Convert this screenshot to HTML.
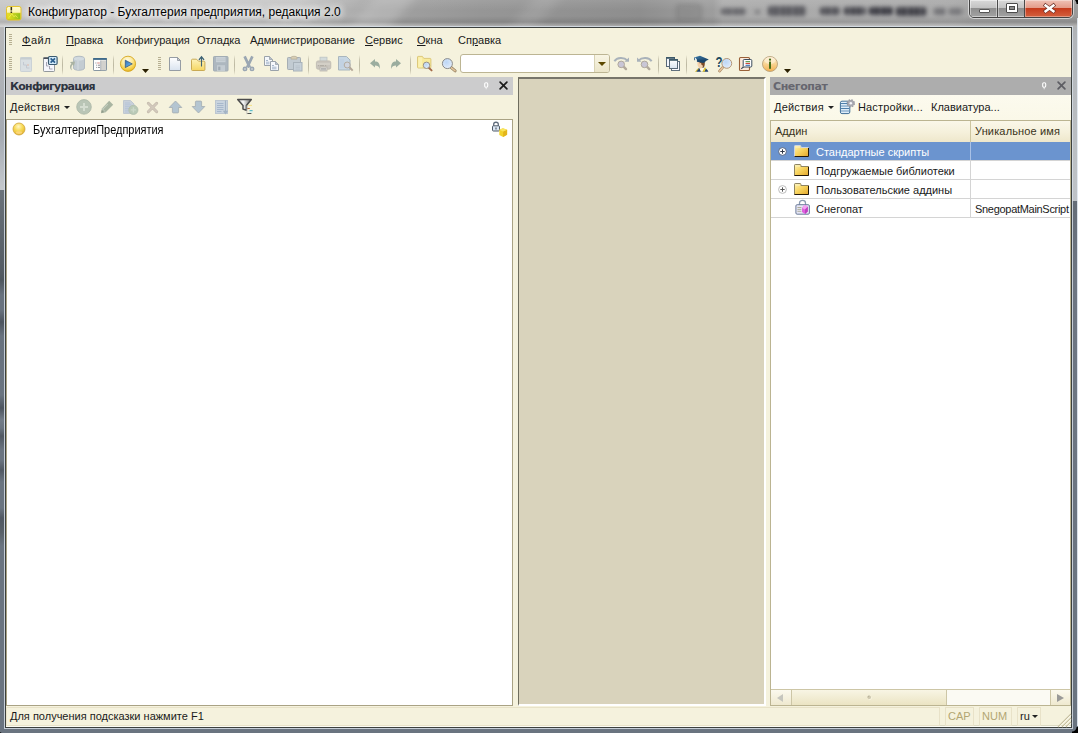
<!DOCTYPE html>
<html lang="ru">
<head>
<meta charset="utf-8">
<title>Конфигуратор - Бухгалтерия предприятия, редакция 2.0</title>
<style>
html,body{margin:0;padding:0;}
body{width:1078px;height:733px;overflow:hidden;position:relative;background:#8a8f96;font-family:"Liberation Sans",sans-serif;font-size:11px;color:#1a1a1a;}
.abs{position:absolute;}
#frame{position:absolute;left:0;top:0;width:1078px;height:733px;background:linear-gradient(to bottom,#656d77 200px,#6e7682 280px,#6a7480 733px);}
#titlebar{position:absolute;left:0;top:0;width:1078px;height:27px;overflow:hidden;
 background:linear-gradient(to right,#c6c6c6 0px,#cfcfcf 120px,#c4c4c4 300px,#a2a2a2 380px,#969696 480px,#8e8e8e 640px,#9c9c9c 700px,#a6a6a6 900px,#9a9a9a 1078px);}
#titletext{position:absolute;left:28px;top:5px;font-size:12px;line-height:14px;color:#000;white-space:nowrap;text-shadow:0 0 6px #fff,0 0 8px #fff,0 0 10px #fff;}
#client{position:absolute;left:6px;top:28px;width:1065px;height:699px;background:#f5f2dd;}
.t{position:absolute;white-space:nowrap;line-height:13px;font-size:11px;}
u{text-decoration:underline;text-underline-offset:1px;}

.grip{position:absolute;width:3px;background:repeating-linear-gradient(to bottom,#b7b092 0px,#b7b092 1px,transparent 1px,transparent 2px);}
.sep{position:absolute;top:27px;width:1px;height:20px;background:linear-gradient(to bottom,rgba(196,192,172,0),#cbc7b1 22%,#bdb9a2 50%,#cbc7b1 78%,rgba(196,192,172,0));}
.tri{width:0;height:0;border-left:3px solid transparent;border-right:3px solid transparent;border-top:3px solid #222;}
.sbox{height:19px;box-sizing:border-box;border:1px solid #e8e2c8;}
.ic{position:absolute;display:block;overflow:visible;}
.blr{filter:blur(2.1px);border-radius:3px;}
.tx{background:repeating-linear-gradient(90deg,rgba(28,28,38,.95) 0,rgba(28,28,38,.95) 4px,rgba(28,28,38,.55) 4px,rgba(28,28,38,.55) 6.5px);}
.hd{font-family:"DejaVu Sans","Liberation Sans",sans-serif;font-weight:bold;font-size:11px;letter-spacing:-0.75px;}
.sp1{letter-spacing:0.15px;}
</style>
</head>
<body>
<div id="frame">
 <div class="abs" style="left:0;top:0;width:6px;height:190px;background:linear-gradient(to bottom,#bcbcbc 0,#b2b4b8 60px,#a5abb3 135px,#c4c8cc 189px);"></div>
 <div class="abs" style="left:0;top:190px;width:6px;height:543px;background:linear-gradient(to bottom,#6a727a 0,#545c64 80px,#4e565e 90px,#68727e 105px,#68727e 120px,#4c545e 132px,#68727e 146px,#6a7480 205px,#4c545e 218px,#727c88 230px,#6a7480 238px,#505862 246px,#6a7480 260px,#6a7480 270px,#505862 280px,#6a7480 292px,#6a7480 318px,#505862 328px,#586068 342px,#6a7480 356px,#6a7480 543px);"></div>
 <div class="abs" style="left:1071px;top:0;width:7px;height:201px;background:linear-gradient(to bottom,#a8a8a8 0,#b2b6ba 40px,#bfc3c7 200px);"></div>
</div>
<div id="titlebar">
  <div class="abs" style="left:713px;top:0;width:262px;height:27px;background:linear-gradient(to right,rgba(176,176,176,.0),rgba(176,176,176,.75) 10px,rgba(170,170,170,.7) 240px,rgba(160,160,160,0));"></div>
  <div class="abs" style="left:0;top:0;width:1078px;height:27px;background:linear-gradient(to bottom,rgba(255,255,255,.10) 0,rgba(255,255,255,0) 10px,rgba(0,0,0,.0) 16px,rgba(0,0,0,.10) 22px,rgba(255,255,255,.25) 26px);"></div>
  <div class="abs" style="left:360px;top:-20px;width:40px;height:70px;background:rgba(255,255,255,.18);transform:skewX(-40deg);filter:blur(6px);"></div>
  <div class="abs" style="left:520px;top:-20px;width:26px;height:70px;background:rgba(255,255,255,.10);transform:skewX(-40deg);filter:blur(6px);"></div>
  <div class="abs blr" style="left:677px;top:5px;width:24px;height:15px;background:rgba(120,120,120,.35);box-shadow:0 0 0 1px rgba(70,70,70,.35);"></div>
  <div class="abs blr tx" style="left:721px;top:8px;width:25px;height:7px;opacity:.55;"></div>
  <div class="abs blr" style="left:755px;top:10px;width:5px;height:4px;background:rgba(60,60,66,.5);"></div>
  <div class="abs blr tx" style="left:768px;top:6px;width:38px;height:10px;opacity:.65;"></div>
  <div class="abs blr tx" style="left:820px;top:7px;width:20px;height:8px;opacity:.7;"></div>
  <div class="abs blr tx" style="left:844px;top:7px;width:22px;height:8px;opacity:.8;"></div>
  <div class="abs blr tx" style="left:869px;top:7px;width:24px;height:8px;opacity:.9;"></div>
  <div class="abs blr tx" style="left:896px;top:7px;width:30px;height:9px;opacity:.85;"></div>
  <div class="abs blr tx" style="left:934px;top:8px;width:12px;height:7px;opacity:.45;"></div>
  <div class="abs blr tx" style="left:949px;top:8px;width:14px;height:7px;opacity:.4;"></div>
  <div id="titletext">Конфигуратор - Бухгалтерия предприятия, редакция 2.0</div>
  <!-- window buttons -->
  <div class="abs" style="left:969px;top:-1px;width:104px;height:19px;box-sizing:border-box;border:1px solid #434343;border-radius:0 0 5px 5px;overflow:hidden;box-shadow:0 0 0 1px rgba(255,255,255,.55);">
    <div class="abs" style="left:0;top:0;width:55px;height:17px;background:linear-gradient(to bottom,#d9d9d9 0,#c2c2c2 8px,#8d8d8d 8px,#a3a3a3 17px);box-shadow:inset 0 0 0 1px rgba(255,255,255,.45);"></div>
    <div class="abs" style="left:27px;top:0;width:1px;height:17px;background:#4a4a4a;box-shadow:1px 0 0 rgba(255,255,255,.4),-1px 0 0 rgba(255,255,255,.4);"></div>
    <div class="abs" style="left:54px;top:0;width:1px;height:17px;background:#4a4a4a;"></div>
    <div class="abs" style="left:55px;top:0;width:47px;height:17px;background:linear-gradient(to bottom,#efc2b6 0,#e39a88 8px,#c5391b 8px,#d4603e 17px);box-shadow:inset 0 0 0 1px rgba(255,255,255,.35);"></div>
    <!-- glyphs -->
    <div class="abs" style="left:9px;top:9px;width:11px;height:4px;box-sizing:border-box;background:#fff;border:1px solid #555;border-radius:1px;"></div>
    <div class="abs" style="left:36px;top:3px;width:12px;height:10px;box-sizing:border-box;border:1px solid #4c4c4c;border-radius:1px;background:#fff;"></div>
    <div class="abs" style="left:39px;top:6px;width:6px;height:4px;box-sizing:border-box;border:1px solid #4c4c4c;background:#8c8c8c;"></div>
    <svg class="ic" style="left:73px;top:3px" width="13" height="11" viewBox="0 0 13 11"><path d="M2.600 2.400l7.800 5.800M10.400 2.400l-7.800 5.800" stroke="#6a3028" stroke-width="3.800" stroke-linecap="square"/><path d="M2.600 2.400l7.800 5.800M10.400 2.400l-7.800 5.800" stroke="#ffffff" stroke-width="2.500" stroke-linecap="square"/></svg>
  </div>
</div>
<!-- black corners -->
<div class="abs" style="left:-4px;top:-4px;width:8px;height:8px;background:radial-gradient(circle at 100% 100%,transparent 6px,#000 7px);"></div>
<div class="abs" style="left:1071px;top:-3px;width:7px;height:7px;background:radial-gradient(circle at 0 100%,transparent 5px,#000 6px);"></div>
<div class="abs" style="left:-3px;top:728px;width:7px;height:7px;background:radial-gradient(circle at 100% 0,transparent 5px,#000 6px);"></div>
<div class="abs" style="left:1072px;top:727px;width:6px;height:6px;background:radial-gradient(circle at 0 0,transparent 4px,#000 5px);"></div>
<!-- window border lines -->
<div class="abs" style="left:4px;top:26px;width:1069px;height:703px;border:1px solid rgba(214,222,230,.85);box-sizing:border-box;"></div>
<div class="abs" style="left:1077px;top:18px;width:1px;height:708px;background:rgba(228,236,244,.9);"></div>
<div class="abs" style="left:5px;top:27px;width:1067px;height:701px;border:1px solid #3c403e;box-sizing:border-box;"></div>
<div id="client">
<!-- menu bar -->
<div class="grip" style="left:3px;top:6px;height:11px;"></div>
<div class="t menu" style="left:16px;top:6px;letter-spacing:0.5px;"><u>Ф</u>айл</div>
<div class="t menu" style="left:60px;top:6px;"><u>П</u>равка</div>
<div class="t menu" style="left:110px;top:6px;">Конфигурация</div>
<div class="t menu" style="left:191px;top:6px;">Отладка</div>
<div class="t menu" style="left:244px;top:6px;">Администрирование</div>
<div class="t menu" style="left:359px;top:6px;"><u>С</u>ервис</div>
<div class="t menu" style="left:411px;top:6px;"><u>О</u>кна</div>
<div class="t menu" style="left:452px;top:6px;">Сп<u>р</u>авка</div>
<!-- toolbar -->
<div class="grip" style="left:3px;top:29px;height:13px;"></div>
<div class="grip" style="left:152px;top:29px;height:13px;"></div>
<div class="sep" style="left:56px;"></div>
<div class="sep" style="left:107px;"></div>
<div class="sep" style="left:228px;"></div>
<div class="sep" style="left:302px;"></div>
<div class="sep" style="left:353px;"></div>
<div class="sep" style="left:404px;"></div>
<div class="sep" style="left:652px;"></div>
<div class="sep" style="left:680px;"></div>
<!-- search combo -->
<div class="abs" style="left:454px;top:26px;width:150px;height:19px;box-sizing:border-box;border:1px solid #bcb593;border-radius:3px;background:#fff;overflow:hidden;">
  <div class="abs" style="right:0;top:0;width:14px;height:17px;border-left:1px solid #d8d2b4;background:linear-gradient(#f8f5e4,#ebe5c9);"></div>
  <div class="abs" style="right:3px;top:7px;width:0;height:0;border-left:4px solid transparent;border-right:4px solid transparent;border-top:4px solid #5c4800;"></div>
</div>

<!-- LEFT PANEL -->
<div class="abs" style="left:0;top:49px;width:507px;height:18px;background:#cccccd;"></div>
<div class="t hd" style="left:4px;top:52px;color:#2e3440;">Конфигурация</div>
<div class="t" style="left:4px;top:73px;letter-spacing:0.2px;">Действия</div>
<div class="abs tri" style="left:58px;top:78px;"></div>
<div class="abs" style="left:0;top:91px;width:507px;height:587px;box-sizing:border-box;border:1px solid #a9a284;background:#fff;"></div>
<div class="t" style="left:27px;top:96px;font-size:12.3px;color:#000;transform:scaleX(0.89);transform-origin:0 0;">БухгалтерияПредприятия</div>

<!-- MDI AREA -->
<div class="abs" style="left:512px;top:49px;width:248px;height:629px;box-sizing:border-box;background:#d9d3bc;border-left:1px solid #6f6d5e;border-top:2px solid #77756a;border-right:2px solid #fff;border-bottom:2px solid #fff;"></div>

<!-- RIGHT PANEL -->
<div class="abs" style="left:764px;top:49px;width:301px;height:18px;background:#adadad;"></div>
<div class="abs" style="left:764px;top:67px;width:301px;height:25px;background:linear-gradient(#fcfaee,#faf8e8);"></div>
<div class="t hd" style="left:767px;top:52px;color:#66666f;letter-spacing:-0.42px;">Снегопат</div>
<div class="t" style="left:768px;top:73px;letter-spacing:0.2px;">Действия</div>
<div class="abs tri" style="left:822px;top:78px;"></div>
<div class="t sp1" style="left:852px;top:73px;">Настройки...</div>
<div class="t" style="left:925px;top:73px;">Клавиатура...</div>
<!-- table -->
<div class="abs" style="left:764px;top:92px;width:301px;height:586px;box-sizing:border-box;border:1px solid #bbb491;background:#fff;overflow:hidden;">
  <div class="abs" style="left:0;top:0;width:299px;height:21px;background:linear-gradient(#faf7e9,#f5f0db 55%,#eee7cb);"></div>
  <div class="abs" style="left:0;top:21px;width:299px;height:18px;background:#6b94cf;"></div>
  <div class="abs" style="left:0;top:39px;width:299px;height:1px;background:#d4d4d4;"></div>
  <div class="abs" style="left:0;top:58px;width:299px;height:1px;background:#d4d4d4;"></div>
  <div class="abs" style="left:0;top:77px;width:299px;height:1px;background:#d4d4d4;"></div>
  <div class="abs" style="left:0;top:96px;width:299px;height:1px;background:#d4d4d4;"></div>
  <div class="abs" style="left:199px;top:0;width:1px;height:21px;background:#cdc59f;"></div>
  <div class="abs" style="left:199px;top:21px;width:1px;height:76px;background:#d4d4d4;"></div>
  <div class="abs" style="left:199px;top:21px;width:1px;height:18px;background:#a9c1e6;"></div>
  <div class="t" style="left:4px;top:4px;color:#3a3420;">Аддин</div>
  <div class="t sp1" style="left:204px;top:4px;color:#3a3420;">Уникальное имя</div>
  <div class="t" style="left:45px;top:25px;color:#fff;">Стандартные скрипты</div>
  <div class="t" style="left:45px;top:44px;">Подгружаемые библиотеки</div>
  <div class="t" style="left:45px;top:63px;">Пользовательские аддины</div>
  <div class="t" style="left:45px;top:82px;">Снегопат</div>
  <div class="t" style="left:204px;top:82px;letter-spacing:-0.3px;">SnegopatMainScript</div>
  <!-- h scrollbar -->
  <div class="abs" style="left:0;top:568px;width:299px;height:17px;box-sizing:border-box;border-top:1px solid #cdc6a6;background:#fbfaf3;"></div>
  <div class="abs" style="left:0;top:569px;width:20px;height:15px;background:linear-gradient(#fbf9ee,#efe9cf);border-right:1px solid #cdc6a6;"></div>
  <div class="abs" style="left:21px;top:569px;width:154px;height:15px;background:linear-gradient(#f8f5e4,#ebe4c3);border-right:1px solid #cdc6a6;"></div>
  <div class="abs" style="left:279px;top:569px;width:20px;height:15px;background:linear-gradient(#fbf9ee,#efe9cf);border-left:1px solid #cdc6a6;"></div>
  <div class="abs" style="left:6px;top:573px;width:0;height:0;border-top:4px solid transparent;border-bottom:4px solid transparent;border-right:6px solid #c6c6be;"></div>
  <div class="abs" style="left:286px;top:573px;width:0;height:0;border-top:4px solid transparent;border-bottom:4px solid transparent;border-left:7px solid #9a9a98;"></div>
  <div class="abs" style="left:97px;top:575px;width:3px;height:3px;border-radius:2px;background:#d0cab0;box-shadow:-0.5px -0.5px 0 #a8a28a,0.5px 0.5px 0 #fffdf0;"></div>
</div>

<!-- STATUS BAR -->
<div class="abs" style="left:0;top:697px;width:1065px;height:1px;background:#dcdac2;"></div>
<div class="abs" style="left:0;top:698px;width:1065px;height:1px;background:#fcfcf4;"></div>
<div class="t" style="left:4px;top:682px;">Для получения подсказки нажмите F1</div>
<div class="abs sbox" style="left:0px;top:679px;width:934px;"></div>
<div class="abs sbox" style="left:939px;top:679px;width:29px;"></div>
<div class="abs sbox" style="left:973px;top:679px;width:33px;"></div>
<div class="abs sbox" style="left:1011px;top:679px;width:24px;"></div>
<div class="t" style="left:942px;top:682px;color:#b3a672;">CAP</div>
<div class="t" style="left:976px;top:682px;color:#b3a672;">NUM</div>
<div class="t" style="left:1014px;top:682px;">ru</div>
<div class="abs tri" style="left:1026px;top:687px;"></div>
</div>
<!-- ICONS LAYER (page coordinates) -->
<div id="icons" class="abs" style="left:0;top:0;width:1078px;height:733px;pointer-events:none;">
<svg width="0" height="0" style="position:absolute">
 <defs>
  <linearGradient id="gDoc" x1="0" y1="0" x2="0" y2="1"><stop offset="0" stop-color="#ffffff"/><stop offset="1" stop-color="#d9e3ef"/></linearGradient>
  <linearGradient id="gFold" x1="0" y1="0" x2="0" y2="1"><stop offset="0" stop-color="#fdf2b8"/><stop offset="1" stop-color="#f5d662"/></linearGradient>
  <linearGradient id="gFold2" x1="0" y1="0" x2="1" y2="1"><stop offset="0" stop-color="#fff3b0"/><stop offset="0.5" stop-color="#f7d25c"/><stop offset="1" stop-color="#e2a62c"/></linearGradient>
  <radialGradient id="gPlay" cx="0.45" cy="0.3" r="0.75"><stop offset="0" stop-color="#fffdf0"/><stop offset="0.45" stop-color="#fbe99a"/><stop offset="0.8" stop-color="#f3c93a"/><stop offset="1" stop-color="#d9a51e"/></radialGradient>
  <linearGradient id="gTri" x1="0" y1="0" x2="1" y2="1"><stop offset="0" stop-color="#2f6fb8"/><stop offset="0.6" stop-color="#5aa2de"/><stop offset="1" stop-color="#8cc4ee"/></linearGradient>
  <radialGradient id="gLens" cx="0.4" cy="0.35" r="0.8"><stop offset="0" stop-color="#bcd6f6"/><stop offset="0.6" stop-color="#d8e6f8"/><stop offset="1" stop-color="#f4f8fd"/></radialGradient>
  <linearGradient id="gInfo" x1="0" y1="0" x2="0" y2="1"><stop offset="0" stop-color="#fdeccc"/><stop offset="0.5" stop-color="#f9d392"/><stop offset="1" stop-color="#f2b04e"/></linearGradient>
  <radialGradient id="gBall" cx="0.45" cy="0.3" r="0.8"><stop offset="0" stop-color="#fff6c4"/><stop offset="0.45" stop-color="#f7d954"/><stop offset="0.85" stop-color="#e3b431"/><stop offset="1" stop-color="#c89a3a"/></radialGradient>
  <linearGradient id="gFunnel" x1="0" y1="0" x2="1" y2="0"><stop offset="0" stop-color="#c8c8c8"/><stop offset="0.4" stop-color="#f8f8f8"/><stop offset="1" stop-color="#707070"/></linearGradient>
  <linearGradient id="gCap" x1="0" y1="0" x2="1" y2="1"><stop offset="0" stop-color="#3a78a8"/><stop offset="1" stop-color="#133a5c"/></linearGradient>
 </defs>
</svg>

<!-- title icon -->
<svg class="ic" style="left:6px;top:5.5px" width="15.5" height="14.5" viewBox="0 0 16 15">
 <defs><linearGradient id="gT1" x1="0" y1="0" x2="0" y2="1"><stop offset="0" stop-color="#fffbd0"/><stop offset="0.42" stop-color="#fdf6b4"/><stop offset="0.5" stop-color="#d9d640"/><stop offset="1" stop-color="#b4c81c"/></linearGradient>
 <linearGradient id="gT2" x1="0" y1="0" x2="1" y2="0"><stop offset="0" stop-color="#f2e21e" stop-opacity="0.9"/><stop offset="1" stop-color="#8cc018" stop-opacity="0.9"/></linearGradient></defs>
 <rect x="0.5" y="0.5" width="15" height="14" rx="2" fill="url(#gT1)" stroke="#e6c322"/>
 <rect x="1.5" y="7.5" width="13" height="6" fill="url(#gT2)"/>
 <path d="M5.5 1v3.6M5.5 5.6v1.6" stroke="#3a3418" stroke-width="1.6"/>
 <path d="M3 12l3-4 2 3 2-1 2 2" stroke="#f6f05a" stroke-width="1" fill="none" opacity="0.8"/>
</svg>

<!-- 1 tree window disabled -->
<svg class="ic" style="left:18px;top:56px" width="16" height="16" viewBox="0 0 16 16">
 <rect x="2.5" y="1.5" width="11" height="14" rx="0.8" fill="#d9dfe2" stroke="#cbd2d6"/>
 <rect x="2.5" y="1.5" width="11" height="2" fill="#c6cdd0"/>
 <path d="M5.5 6v3h3M8.5 9v3h3" stroke="#c3c9d2" fill="none"/>
 <path d="M9 9h2" stroke="#e0b8a8"/>
</svg>
<!-- 2 close window -->
<svg class="ic" style="left:42px;top:56px" width="16" height="16" viewBox="0 0 16 16">
 <rect x="1.5" y="1.5" width="11" height="14" rx="0.8" fill="#f6f6fc" stroke="#878d93" stroke-width="0.9"/>
 <rect x="1.5" y="1.5" width="5" height="1.5" fill="#4a5058"/>
 <path d="M4.5 6v4h2M7.5 10v3h3" stroke="#a4a4b2" fill="none"/>
 <rect x="6.5" y="0.5" width="8.6" height="8" rx="1.2" fill="#d4ebfb" stroke="#3a5a70" stroke-width="1.2"/>
 <path d="M8.6 2.4l4.4 4.2M13 2.4l-4.4 4.2" stroke="#2c5f8e" stroke-width="1.7"/>
</svg>
<!-- 3 db -->
<svg class="ic" style="left:69px;top:56px" width="17" height="16" viewBox="0 0 17 16">
 <path d="M4.5 2.5c0-3 11-3 11 0v9.5c0 3-11 3-11 0z" fill="#c3ccd2" stroke="#b3bcc3"/>
 <ellipse cx="10" cy="2.7" rx="5.2" ry="1.8" fill="#d3dbe0"/>
 <path d="M9 3v11" stroke="#d0d8dc" stroke-width="2" opacity="0.7"/>
 <path d="M1 6l5-0.5-1 4.5-1.2-1.4c-1.6 1.6-1.8 3.6-0.8 6-2.6-2.2-2.6-5-0.6-7.2z" fill="#a9b2a2"/>
</svg>
<!-- 4 window list -->
<svg class="ic" style="left:92px;top:56px" width="16" height="16" viewBox="0 0 16 16">
 <rect x="1.5" y="2.5" width="13" height="12" rx="0.6" fill="#ffffff" stroke="#7b8b99" stroke-width="0.9"/>
 <rect x="1.2" y="2" width="13.6" height="1.9" fill="#3f6a8a"/>
 <rect x="9" y="4.4" width="5" height="9.8" fill="#d2d2ce"/>
 <path d="M8.7 4.4v10" stroke="#9aa2a8" stroke-width="0.8"/>
 <path d="M3.4 7h1" stroke="#8a8a90"/><path d="M5.2 7h2.6" stroke="#d07a74" stroke-width="0.9"/>
 <path d="M4.2 9.2h1M6 9.2h2M4.2 11.4h1M6 11.4h2" stroke="#8a8a90"/>
</svg>
<!-- 5 play -->
<svg class="ic" style="left:119px;top:55px" width="18" height="18" viewBox="0 0 18 18">
 <circle cx="9" cy="8.8" r="7.6" fill="url(#gPlay)" stroke="#d6a722" stroke-width="0.9"/>
 <path d="M6.3 5.2v7.4l7-3.7z" fill="url(#gTri)" stroke="#2c4c74" stroke-width="0.7" stroke-linejoin="round"/>
</svg>
<svg class="ic" style="left:142px;top:69px" width="7" height="4" viewBox="0 0 7 4"><path d="M0 0h7l-3.5 4z" fill="#2a2000"/></svg>
<!-- 6 new -->
<svg class="ic" style="left:167px;top:56px" width="16" height="16" viewBox="0 0 16 16">
 <path d="M2.500 1.500h8l3 3v10h-11z" fill="url(#gDoc)" stroke="#959ca4"/>
 <path d="M10.5 1.5v3h3z" fill="#c9d0d8" stroke="#8b929a" stroke-width="0.8"/>
</svg>
<!-- 7 open -->
<svg class="ic" style="left:190px;top:56px" width="16" height="16" viewBox="0 0 16 16">
 <path d="M1.5 4.2c0-0.6 0.4-1 1-1h4l2 2h5.4c0.6 0 1 0.4 1 1v7.3c0 0.6-0.4 1-1 1h-11.4c-0.6 0-1-0.4-1-1z" fill="url(#gFold)" stroke="#c9aa54"/>
 <path d="M11.5 10.5v-9" stroke="#3c6274" stroke-width="1.1"/>
 <path d="M9 3.900l2.500-3 2.500 3" fill="none" stroke="#3c6274" stroke-width="1.400"/>
</svg>
<!-- 8 save disabled -->
<svg class="ic" style="left:213px;top:56px" width="16" height="16" viewBox="0 0 16 16">
 <rect x="0.5" y="0.5" width="14.5" height="14.5" rx="0.8" fill="#adb7bf" stroke="#a2acb4"/>
 <rect x="3" y="1" width="9.5" height="5.2" fill="#c9d1d7"/>
 <path d="M3.5 3h8.5M3.5 4.6h8.5" stroke="#b8c1c8" stroke-width="0.6"/>
 <rect x="4" y="9.2" width="8" height="5.8" fill="#c4ccd2"/>
 <rect x="5.2" y="10.6" width="2.2" height="3.6" fill="#a0aab2"/>
</svg>
<!-- 9 cut disabled -->
<svg class="ic" style="left:240px;top:56px" width="16" height="16" viewBox="0 0 16 16">
 <path d="M4.600 0.400l5.200 11M12.400 0.400l-5.200 11" stroke="#9aa6b2" stroke-width="2.700"/>
 <circle cx="5" cy="12.900" r="1.600" fill="#f0f0ea" stroke="#9aa6b2" stroke-width="1.700"/>
 <circle cx="12" cy="12.900" r="1.600" fill="#f0f0ea" stroke="#9aa6b2" stroke-width="1.700"/>
</svg>
<!-- 10 copy -->
<svg class="ic" style="left:263px;top:56px" width="17" height="16" viewBox="0 0 17 16">
 <path d="M1.5 0.5h5l3 3v6h-8z" fill="#f4f7fb" stroke="#9aa2aa"/>
 <path d="M6.5 0.5v3h3" fill="#b7c0c9" stroke="#9aa2aa" stroke-width="0.8"/>
 <path d="M3 4.5h2M3 6.2h3.5M3 7.8h3.5" stroke="#9fb0c6" stroke-width="0.9"/>
 <path d="M7.5 5.5h5l3 3v6h-8z" fill="#f6f8fc" stroke="#9aa2aa"/>
 <path d="M12.5 5.5v3h3" fill="#b7c0c9" stroke="#9aa2aa" stroke-width="0.8"/>
 <path d="M9 9.5h2M9 11.2h4.5M9 12.8h4.5" stroke="#9fb0c6" stroke-width="0.9"/>
</svg>
<!-- 11 paste disabled -->
<svg class="ic" style="left:286px;top:56px" width="17" height="16" viewBox="0 0 17 16">
 <rect x="1.5" y="1.5" width="13" height="12" rx="0.8" fill="#c2cbd2" stroke="#a6aeb4"/>
 <path d="M5 1.5c0-1.6 6-1.6 6 0v1.6h-6z" fill="#d8ceb4" stroke="#b9b09a" stroke-width="0.8"/>
 <rect x="7.5" y="6.5" width="8.5" height="8.5" fill="#c6d0d8" stroke="#a8b2ba"/>
 <path d="M9.5 10h4.5M9.5 11.6h4.5M9.5 13.2h4.5" stroke="#b4bec8" stroke-width="0.7"/>
</svg>
<!-- 12 print disabled -->
<svg class="ic" style="left:315px;top:56px" width="17" height="16" viewBox="0 0 17 16">
 <rect x="5" y="1.2" width="7" height="5.8" fill="#d3dbdb" stroke="#bcc4c4" stroke-width="0.8"/>
 <rect x="1.4" y="4.9" width="14.4" height="8.3" rx="1.8" fill="#c9c5bd" stroke="#bdb9b0" stroke-width="0.8"/>
 <path d="M2 8h13" stroke="#d6d2ca" stroke-width="1.5"/>
 <path d="M3 9.7h1.2M5 9.7h4M10 9.7h1.2" stroke="#a9a59c" stroke-width="0.9"/>
 <rect x="5" y="11" width="7" height="4" fill="#dcdcd8" stroke="#b9b5ac" stroke-width="0.8"/>
 <path d="M6 12.6h5M6 13.8h5" stroke="#a5a5a5" stroke-width="0.8"/>
</svg>
<!-- 13 preview disabled -->
<svg class="ic" style="left:338px;top:56px" width="17" height="16" viewBox="0 0 17 16">
 <path d="M0.5 0.5h8l3.5 3.5v10h-11.5z" fill="#c7d7e4" stroke="#a9b6be"/>
 <path d="M3 3v9M5 3v9" stroke="#bccbe0" stroke-width="1.2" opacity="0.7"/>
 <circle cx="9.2" cy="9" r="3" fill="#cfd5df" stroke="#b3aba0" stroke-width="1"/>
 <path d="M11.5 11.3l3.2 3.3" stroke="#b5a898" stroke-width="2"/>
</svg>
<!-- 14 undo disabled -->
<svg class="ic" style="left:367px;top:56px" width="16" height="16" viewBox="0 0 16 16">
 <path d="M3 7.2l5-4.2v2.6c3.2 0 5 1.6 5 7.4-1.2-2.8-2.4-3.4-5-3.4v2z" fill="#9bad9f"/>
</svg>
<!-- 15 redo disabled -->
<svg class="ic" style="left:388px;top:56px" width="16" height="16" viewBox="0 0 16 16">
 <path d="M13 7.2l-5-4.2v2.6c-3.2 0-5 1.6-5 7.4 1.2-2.8 2.4-3.4 5-3.4v2z" fill="#9bad9f"/>
</svg>
<!-- 16 find in files -->
<svg class="ic" style="left:416px;top:56px" width="17" height="16" viewBox="0 0 17 16">
 <path d="M1.5 1c0-0.4 0.3-0.6 0.6-0.6h4.3l1.4 2h6.4c0.4 0 0.7 0.3 0.7 0.7v8.2c0 0.4-0.3 0.7-0.7 0.7h-12c-0.4 0-0.7-0.3-0.7-0.7z" fill="#f9eb9c" stroke="#d9c474" stroke-width="0.9"/>
 <path d="M2.4 1.4h3.6v10h-3.6z" fill="#fbf3b8" opacity="0.8"/>
 <path d="M12.8 11.8l2.8 2.6" stroke="#a46a48" stroke-width="1.9" stroke-linecap="round"/>
 <circle cx="10.5" cy="9.3" r="3.2" fill="url(#gLens)" stroke="#8e847c" stroke-width="0.9"/>
</svg>
<!-- 17 search -->
<svg class="ic" style="left:440px;top:56px" width="17" height="17" viewBox="0 0 17 17">
 <path d="M11 11.4l4.2 3.5" stroke="#8c7a5c" stroke-width="2.8" stroke-linecap="round"/>
 <path d="M11.2 11.6l3.9 3.2" stroke="#e2c49c" stroke-width="1.6" stroke-linecap="round"/>
 <circle cx="7.4" cy="7.6" r="5" fill="url(#gLens)" stroke="#7e7e7e" stroke-width="0.9"/>
</svg>
<!-- 18 find next disabled -->
<svg class="ic" style="left:613px;top:56px" width="17" height="16" viewBox="0 0 17 16">
 <path d="M1.4 5.200c2.500-4 9.500-4.400 13.200-0.600" stroke="#a9b2ba" stroke-width="2" fill="none"/>
 <path d="M16 1.6v4.2h-4.6z" fill="#a9b2ba"/>
 <path d="M10.400 10.400l2.600 2.700" stroke="#b3aa9c" stroke-width="2.400" stroke-linecap="round"/>
 <circle cx="8.200" cy="8.400" r="3.300" fill="#c9c6d6" stroke="#b1a99c" stroke-width="1"/>
</svg>
<!-- 19 find prev disabled -->
<svg class="ic" style="left:636px;top:56px" width="17" height="16" viewBox="0 0 17 16">
 <path d="M15.600 5.200c-2.500-4-9.500-4.400-13.200-0.600" stroke="#a9b2ba" stroke-width="2" fill="none"/>
 <path d="M1 1.6v4.2h4.6z" fill="#a9b2ba"/>
 <path d="M10.700 10.400l2.600 2.700" stroke="#b3aa9c" stroke-width="2.400" stroke-linecap="round"/>
 <circle cx="8.500" cy="8.400" r="3.300" fill="#c9c6d6" stroke="#b1a99c" stroke-width="1"/>
</svg>
<!-- 20 windows -->
<svg class="ic" style="left:665px;top:56px" width="16" height="16" viewBox="0 0 16 16">
 <rect x="6.5" y="5.5" width="8" height="9" fill="#fafaff" stroke="#61707d"/>
 <rect x="4.5" y="3.5" width="8" height="9" fill="url(#gDoc)" stroke="#586877"/>
 <rect x="1.5" y="1.5" width="8" height="9" fill="#f4f6fc" stroke="#586877"/>
 <rect x="1.2" y="1" width="8.6" height="1.8" fill="#3c5868"/>
 <rect x="4.5" y="3.5" width="8" height="9" fill="url(#gDoc)" stroke="#586877"/>
 <rect x="4.2" y="3" width="8.6" height="1.8" fill="#3c5868"/>
 <path d="M13 5.5h1.5v9h-8v-1.7" fill="none" stroke="#61707d"/>
</svg>
<!-- 21 person -->
<svg class="ic" style="left:693px;top:55px" width="17" height="17" viewBox="0 0 17 17">
 <path d="M3.2 16.8c0.5-2.5 2.2-3.6 4.3-4.2h2.6c2.6 0.5 4.6 2 5.3 4.2z" fill="#1f3f6e"/>
 <path d="M1.8 16.8l3.2-3.4 1 0.4-2.8 3z" fill="#e2c42c"/>
 <path d="M6.3 13l1.6 3.8h2l2-4z" fill="#fffbe6"/>
 <path d="M9.3 16.8l2.5-4.4 1.4 0.5-1.6 3.9z" fill="#e8cc34"/>
 <path d="M4.6 6.8c-0.6 2.7 0.2 5.6 2.5 6.6l2.3-0.4 0.6-6.4z" fill="#f4cfa8"/>
 <path d="M6.8 6l-0.2 2.6 1.4-0.8 0.6 2.2 1 0.2 0.2 2.8 1.4-1.2c0.8-1.8 0.8-4.2 0.2-5.8z" fill="#7a4a26"/>
 <path d="M1 2.4l6-1.6 8.8 3.8-5 2.4-6.6-1.4-1.8-2z" fill="url(#gCap)"/>
 <path d="M3.9 4.6v2.2l6.5 1.3 2-1.2v-1.8z" fill="#1b456a"/>
 <path d="M1.6 2.6v2.6" stroke="#2a5a80" stroke-width="0.9"/>
 <path d="M2.2 2.7l1.3 2.5" stroke="#ffffff" stroke-width="0.9"/>
</svg>
<!-- 22 help search -->
<svg class="ic" style="left:715px;top:55px" width="18" height="18" viewBox="0 0 18 18">
 <path d="M7.5 12.7l-3 3.4" stroke="#a78660" stroke-width="2.7" stroke-linecap="round"/>
 <path d="M7.5 12.7l-3 3.4" stroke="#ecc9a4" stroke-width="1.4" stroke-linecap="round"/>
 <circle cx="11.8" cy="8.4" r="4.9" fill="url(#gLens)" stroke="#ac8c6c" stroke-width="0.9"/>
 <text x="0.8" y="12.2" transform="scale(0.74 1)" font-family="Liberation Sans, sans-serif" font-weight="bold" font-size="15.5" fill="#1c4a5e">?</text>
</svg>
<!-- 23 comment doc -->
<svg class="ic" style="left:738px;top:56px" width="16" height="16" viewBox="0 0 16 16">
 <rect x="1.5" y="1.5" width="10" height="13" rx="1" fill="#fbe9da" stroke="#9a6138" stroke-width="1.1"/>
 <path d="M6.2 3.5h6.6c0.6 0 1 0.4 1 1v5.5c0 0.6-0.4 1-1 1h-6.8l-2.6 1.7 1.8-2.3v-5.9c0-0.6 0.4-1 1-1z" fill="#ffffff" stroke="#3a4b5c" stroke-width="1"/>
 <path d="M7.5 5.7h4.5" stroke="#4c8c3a" stroke-width="1.1"/>
 <path d="M7.5 7.5h4.5" stroke="#d24a3a" stroke-width="1.1"/>
 <path d="M7.5 9.3h4.5" stroke="#3a6ab2" stroke-width="1.1"/>
</svg>
<!-- 24 info -->
<svg class="ic" style="left:761px;top:55px" width="18" height="18" viewBox="0 0 18 18">
 <circle cx="9" cy="9" r="7.5" fill="url(#gInfo)" stroke="#b9a27c" stroke-width="0.9"/>
 <ellipse cx="9" cy="5.5" rx="5.5" ry="3.6" fill="#fff6e2" opacity="0.55"/>
 <circle cx="9" cy="4.7" r="1.1" fill="#3f6b1a"/>
 <rect x="8" y="6.6" width="2" height="7.2" fill="#4a7018"/>
</svg>
<svg class="ic" style="left:784px;top:69px" width="7" height="4" viewBox="0 0 7 4"><path d="M0 0h7l-3.5 4z" fill="#2a2000"/></svg>

<!-- panel header pin + close (left) -->
<svg class="ic" style="left:483px;top:81px" width="7" height="10" viewBox="0 0 7 10">
 <rect x="1.700" y="1.800" width="3" height="4.400" rx="1.200" fill="none" stroke="#ffffff" stroke-width="1.100"/>
 <path d="M3.200 6.300v2" stroke="#f2f2f2" stroke-width="0.900"/>
</svg>
<svg class="ic" style="left:498px;top:80px" width="11" height="11" viewBox="0 0 11 11">
 <path d="M2.100 2.100l6.800 6.800M8.900 2.100l-6.800 6.800" stroke="#1c1c1c" stroke-width="1.700" stroke-linecap="round"/>
</svg>
<!-- right -->
<svg class="ic" style="left:1041px;top:81px" width="7" height="10" viewBox="0 0 7 10">
 <rect x="1.700" y="1.800" width="3" height="4.400" rx="1.200" fill="none" stroke="#ffffff" stroke-width="1.100"/>
 <path d="M3.200 6.300v2" stroke="#f2f2f2" stroke-width="0.900"/>
</svg>
<svg class="ic" style="left:1056px;top:80px" width="11" height="11" viewBox="0 0 11 11">
 <path d="M2.100 2.100l6.800 6.800M8.900 2.100l-6.800 6.800" stroke="#5d5d63" stroke-width="1.700" stroke-linecap="round"/>
</svg>

<!-- left panel toolbar -->
<svg class="ic" style="left:76px;top:99px" width="16" height="16" viewBox="0 0 16 16">
 <circle cx="8" cy="7.9" r="7.3" fill="#b9c5b6" stroke="#aab6a6" stroke-width="0.8"/>
 <path d="M8 3.900v8M4 7.900h8" stroke="#d5ddd1" stroke-width="2"/>
</svg>
<svg class="ic" style="left:99px;top:99px" width="16" height="16" viewBox="0 0 16 16">
 <path d="M10.200 1.800l4 4-7.500 7.500-4.700 0.900 0.900-4.700z" fill="#a9b5a2"/>
 <path d="M8.8 5.2l-5.2 5.2" stroke="#c4cec0" stroke-width="1.1"/>
 <path d="M2.2 13.8l0.6-2.8 2.2 2.2z" fill="#8f9a8a"/>
 <path d="M3.1 9.5l3.4 3.4" stroke="#c9d2c4" stroke-width="0.7"/>
</svg>
<svg class="ic" style="left:122px;top:99px" width="17" height="16" viewBox="0 0 17 16">
 <path d="M1.5 1.5h7l3.5 3.5v9.5h-10.5z" fill="#c8d0da" stroke="#c0c8d0"/>
 <path d="M3 4h5M3 5.8h6M3 7.6h6M3 9.4h5M3 11.2h4M3 13h4" stroke="#b1c2d8" stroke-width="0.8"/>
 <circle cx="11.4" cy="10.9" r="4.6" fill="#b9c9b6" stroke="#aebcaa" stroke-width="0.7"/>
 <path d="M11.4 8.3v5.2M8.8 10.9h5.2" stroke="#cdd9ca" stroke-width="1.4"/>
</svg>
<svg class="ic" style="left:145px;top:99px" width="16" height="16" viewBox="0 0 16 16">
 <path d="M3.3 4.3l8.4 8.4M11.7 4.3l-8.4 8.4" stroke="#c2b8aa" stroke-width="2.900" stroke-linecap="round"/>
 <path d="M3.3 4.3l8.4 8.4M11.7 4.3l-8.4 8.4" stroke="#d2c9bc" stroke-width="1.700" stroke-linecap="round"/>
</svg>
<svg class="ic" style="left:168px;top:99px" width="16" height="16" viewBox="0 0 16 16">
 <path d="M7.5 2l6.3 6.5h-3.2v4.6c0 0.5-0.3 0.8-0.8 0.8h-4.6c-0.5 0-0.8-0.3-0.8-0.8v-4.6h-3.2z" fill="#b4c5d1" stroke="#a3acb1" stroke-width="0.8" stroke-linejoin="round"/>
</svg>
<svg class="ic" style="left:191px;top:99px" width="16" height="16" viewBox="0 0 16 16">
 <path d="M7.5 14l6.3-6.5h-3.2v-4.6c0-0.5-0.3-0.8-0.8-0.8h-4.6c-0.5 0-0.8 0.3-0.8 0.8v4.6h-3.2z" fill="#b4c5d1" stroke="#a3acb1" stroke-width="0.8" stroke-linejoin="round"/>
</svg>
<svg class="ic" style="left:214px;top:99px" width="16" height="16" viewBox="0 0 16 16">
 <rect x="1.5" y="1.5" width="12" height="13" fill="#c9d4df" stroke="#bcc6d0"/>
 <path d="M3 4.500h6.500M3 6.500h6.500M3 8.500h6.500M3 10.500h6.500M3 12.500h4.500" stroke="#a7b8cc" stroke-width="1"/>
 <path d="M11.500 1.500v11.500" stroke="#a3b3c4" stroke-width="1.200"/>
 <path d="M8.800 11.800h5.400l-2.700 3.600z" fill="#a3b3c4"/>
</svg>
<svg class="ic" style="left:237px;top:98px" width="17" height="17" viewBox="0 0 17 17">
 <path d="M0.7 1.5h13.6l-4.9 6v4.8l-3.4-1.2v-3.6z" fill="url(#gFunnel)" stroke="#4c4c4c" stroke-width="1.500" stroke-linejoin="round"/>
 <path d="M9.8 7.5v8.7" stroke="#b5b5b5" stroke-width="0.7"/>
 <path d="M11.500 7.400h3.500" stroke="#f2dc78" stroke-width="0.900"/>
 <path d="M10.400 10.500h2.400" stroke="#b0602a" stroke-width="0.900"/>
 <path d="M12.600 12.700h3" stroke="#28a8c0" stroke-width="0.900"/>
 <path d="M12.4 14h3.2" stroke="#bff0f8" stroke-width="0.9"/>
 <path d="M10.400 15.500h4" stroke="#404040" stroke-width="0.900"/>
</svg>

<svg class="ic" style="left:1057px;top:713px" width="14" height="14" viewBox="0 0 14 14">
 <path d="M1 14l13-13M5 14l9-9M9 14l5-5" stroke="#c6bf9f" stroke-width="1.200"/>
 <path d="M2.200 14l11.800-11.800M6.200 14l7.800-7.800M10.200 14l3.800-3.800" stroke="#fdfcf2" stroke-width="0.900"/>
</svg>
<!-- tree item ball -->
<svg class="ic" style="left:12px;top:122px" width="14" height="14" viewBox="0 0 14 14">
 <circle cx="7" cy="7" r="6" fill="url(#gBall)" stroke="#cfa53a" stroke-width="0.8"/>
 <ellipse cx="7" cy="10.6" rx="3.2" ry="1.3" fill="#ffd98a" opacity="0.75"/>
</svg>
<!-- lock + cube -->
<svg class="ic" style="left:491px;top:121px" width="17" height="17" viewBox="0 0 17 17">
 <path d="M2.7 5v-1.8c0-2.6 4.6-2.6 4.6 0v1.8" fill="none" stroke="#5f6c7c" stroke-width="1.3"/>
 <rect x="1.5" y="4.8" width="7" height="5.2" rx="0.9" fill="#dbe6f2" stroke="#4f5a68" stroke-width="1"/>
 <path d="M5 6.5v2" stroke="#4f5a68" stroke-width="1.2"/>
 <path d="M8.3 8.8l3.6-1.6 4.2 1.6v5l-4 2.2-3.8-2z" fill="#f2d32c"/>
 <path d="M12.1 10.4l4-1.6v5l-4 2.2z" fill="#e3b51c"/>
 <path d="M8.3 8.8l3.6-1.6 4.2 1.6-4 1.6z" fill="#f9e560"/>
</svg>

<!-- settings icon -->
<svg class="ic" style="left:839px;top:98px" width="17" height="17" viewBox="0 0 17 17">
 <rect x="1.4" y="3.2" width="9.4" height="12.4" rx="1.6" fill="#cfe3f5" stroke="#3f6e98" stroke-width="1"/>
 <path d="M2 5.5h8M2 8h8.2M2 10.5h8.2M2 13h8.2" stroke="#4f80ac" stroke-width="1.2"/>
 <path d="M2 4.4h6M2 6.8h8M2 9.3h8M2 11.8h8M2 14.2h8" stroke="#e6f2fc" stroke-width="0.9"/>
 <circle cx="11.8" cy="5.3" r="3.3" fill="#a5a5ad" stroke="#9a9aa2" stroke-width="1.8" stroke-dasharray="1.5 1.1"/>
 <circle cx="11.8" cy="5.3" r="2.9" fill="#a9a9b1"/>
 <circle cx="11.8" cy="5.3" r="1.3" fill="#f6f6fa"/>
</svg>

<!-- table tree icons -->
<svg class="ic" style="left:778px;top:147px" width="9" height="9" viewBox="0 0 9 9">
 <circle cx="4.5" cy="4.5" r="3.9" fill="#ffffff" stroke="#465878" stroke-width="0.9"/>
 <path d="M4.5 2.3v4.4M2.3 4.5h4.4" stroke="#2f3646" stroke-width="1"/>
</svg>
<svg class="ic" style="left:778px;top:185px" width="9" height="9" viewBox="0 0 9 9">
 <circle cx="4.5" cy="4.5" r="3.9" fill="#ffffff" stroke="#b4b4b4" stroke-width="0.9"/>
 <path d="M4.5 2.3v4.4M2.3 4.5h4.4" stroke="#565656" stroke-width="1"/>
</svg>
<svg class="ic" style="left:794px;top:145px" width="15" height="12" viewBox="0 0 15 12">
 <path d="M0.5 11.5v-10.300c0-0.400 0.300-0.700 0.700-0.700h5c0.400 0 0.700 0.300 0.700 0.700v1.300h7.600v9z" fill="url(#gFold2)" stroke="#c9d4e6"/>
 <path d="M1.500 1.500h4.800v1h-4.800z" fill="#f8f2c4"/>
 <path d="M0.500 11.500h14v-8.600" stroke="#241808" fill="none"/>
</svg>
<svg class="ic" style="left:794px;top:164px" width="15" height="12" viewBox="0 0 15 12">
 <path d="M0.5 11.5v-10.300c0-0.400 0.300-0.700 0.700-0.700h5c0.400 0 0.700 0.300 0.700 0.700v1.300h7.600v9z" fill="url(#gFold2)" stroke="#8e8462"/>
 <path d="M1.500 1.500h4.800v1h-4.800z" fill="#f8f2c4"/>
 <path d="M0.500 11.500h14v-8.600" stroke="#241808" fill="none"/>
</svg>
<svg class="ic" style="left:794px;top:183px" width="15" height="12" viewBox="0 0 15 12">
 <path d="M0.5 11.5v-10.300c0-0.400 0.300-0.700 0.700-0.700h5c0.400 0 0.700 0.300 0.700 0.700v1.300h7.600v9z" fill="url(#gFold2)" stroke="#8e8462"/>
 <path d="M1.500 1.500h4.800v1h-4.800z" fill="#f8f2c4"/>
 <path d="M0.500 11.500h14v-8.600" stroke="#241808" fill="none"/>
</svg>
<!-- snegopat icon -->
<svg class="ic" style="left:794px;top:199px" width="17" height="17" viewBox="0 0 17 17">
 <path d="M5.5 6v-2c0-3.4 6-3.4 6 0v2" fill="none" stroke="#8b9bb1" stroke-width="1.3"/>
 <rect x="1.9" y="5.7" width="13.5" height="9.5" rx="1.2" fill="#e6e6f6" stroke="#6b7b99" stroke-width="1"/>
 <path d="M3.4 8.5h4M3.4 10.4h4M3.4 12.3h4" stroke="#a8a890" stroke-width="0.9"/>
 <path d="M8 9l2.6-3.2 3.2 2v4.6l-2.8 2.7-3-2z" fill="#de60de"/>
 <path d="M8 9l2.6-3.2 3.2 2-2.8 2.6z" fill="#f2a4f2"/>
 <path d="M11 10.4l2.8-2.6v4.6l-2.8 2.7z" fill="#bf42c2"/>
</svg>
</div>

</body>
</html>
